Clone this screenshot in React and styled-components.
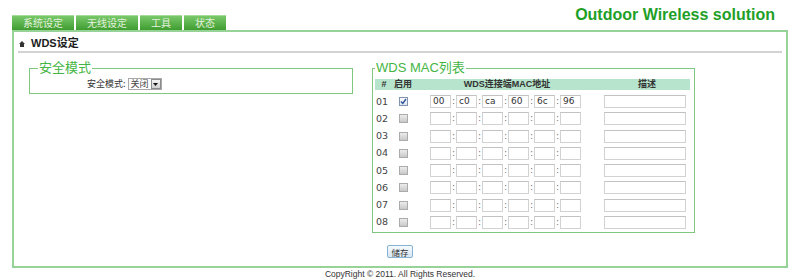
import React from 'react'
import styled, { createGlobalStyle } from 'styled-components'

const GlobalStyle = createGlobalStyle`
  * { box-sizing: border-box; }
  body {
    margin: 0;
    background: #fff;
    font-family: "DejaVu Sans", "Noto Sans CJK SC", sans-serif;
  }
`

const Page = styled.div`
  width: 800px;
  padding: 0 12px;
`

const TopBar = styled.div`
  display: flex;
  justify-content: space-between;
  height: 30px;
`

const Tabs = styled.nav`
  display: flex;
  gap: 2px;
  align-self: flex-end;
`

const Tab = styled.div`
  height: 15px;
  padding: 0 11px;
  font: 10px/14px "Noto Sans CJK SC", sans-serif;
  color: #e4f2de;
  background: linear-gradient(#79c86a, #3f9d30);
  border-top: 1px solid #a6dc9a;
`

const Title = styled.div`
  margin: 6px 13px 0 0;
  font: bold 16px/18px "Liberation Sans", sans-serif;
  color: #1f9f27;
`

const Panel = styled.section`
  border: 2px solid #97d397;
  padding-bottom: 8px;
`

const Heading = styled.h2`
  display: flex;
  align-items: center;
  gap: 6px;
  height: 17px;
  margin: 4px 4px 0;
  padding-left: 1px;
  border-bottom: 2px solid #d3d3d3;
  font: bold 11px/15px "Liberation Sans", "Noto Sans CJK SC", sans-serif;
  color: #1c1c1c;
`

const Columns = styled.div`
  display: flex;
  align-items: flex-start;
  gap: 19px;
  margin: 7px 0 0 15px;
`

const Fieldset = styled.fieldset`
  margin: 0;
  padding: 0;
  min-width: 0;
  width: ${p => p.$w}px;
  border: 1px solid #80c880;
`

const Legend = styled.legend`
  margin-left: ${p => p.$indent}px;
  padding: 0 1px;
  font: 13px/16px "Liberation Sans", "Noto Sans CJK SC", sans-serif;
  color: #44b544;
`

const ModeBody = styled.div`
  display: flex;
  align-items: center;
  height: 17px;
  padding: 1px 0 2px 57px;
`

const Label = styled.span`
  margin-right: 2px;
  font: 9px/12px "Noto Sans CJK SC", sans-serif;
  color: #333;
`

const SelectBox = styled.span`
  display: inline-flex;
  align-items: center;
  width: 34px;
  height: 12px;
  border: 1px solid #a9a9a9;
  background: #fff;
`

const SelectText = styled.span`
  flex: 1;
  padding-left: 2px;
  font: 9px/10px "Noto Sans CJK SC", sans-serif;
  color: #444;
`

const SelectArrow = styled.span`
  display: flex;
  align-items: center;
  justify-content: center;
  width: 10px;
  height: 10px;
  border: 1px solid #8c8c8c;
  background: linear-gradient(#f4f4f4, #cfcfcf);
`

const TableBody = styled.div`
  padding: 3px 4px 1px 2px;
`

const Row = styled.div`
  display: grid;
  grid-template-columns: 18px 25px 178px 94px;
  align-items: center;
  height: ${p => (p.$head ? '11px' : '17.25px')};
  margin-bottom: ${p => (p.$head ? '3px' : '0')};
  background: ${p => (p.$head ? '#b6e4cc' : 'transparent')};
`

const HeadCell = styled.span`
  text-align: ${p => p.$align || 'center'};
  padding-left: ${p => p.$pl || 0}px;
  font: bold 9px/11px "Liberation Sans", "Noto Sans CJK SC", sans-serif;
  color: #333;
`

const Num = styled.span`
  padding-left: 1px;
  font: 9.5px/12px "DejaVu Sans", sans-serif;
  color: #444;
`

const Check = styled.span`
  display: flex;
  align-items: center;
  justify-content: center;
  width: 9px;
  height: 9px;
  margin-left: 6px;
  border: 1px solid ${p => (p.$on ? '#8193ad' : '#ababab')};
  background: ${p => (p.$on ? 'linear-gradient(#fafbfd, #dfe5ee)' : 'linear-gradient(#ececec, #c8c8c8)')};
`

const Mac = styled.div`
  display: flex;
  align-items: center;
  padding-left: 12px;
`

const Field = styled.span`
  width: ${p => p.$w || 21}px;
  height: 13px;
  margin-left: ${p => p.$ml || 0}px;
  padding-left: 2px;
  border: 1px solid #d2d2d2;
  border-top-color: #c2c2c2;
  background: #fff;
  font: 9px/11px "DejaVu Sans", sans-serif;
  color: #333;
`

const Sep = styled.span`
  width: 5px;
  padding-right: 1px;
  text-align: right;
  font: 8px/11px "DejaVu Sans", sans-serif;
  color: #666;
`

const Actions = styled.div`
  display: flex;
  justify-content: center;
  margin-top: 12px;
`

const SaveButton = styled.button`
  width: 26px;
  height: 13px;
  padding: 0;
  border: 1px solid #84b3d6;
  border-radius: 2px;
  background: linear-gradient(#f6fafd, #d8e6f0);
  font: 8.5px/10px "Noto Sans CJK SC", sans-serif;
  color: #333;
`

const Footer = styled.footer`
  height: 12px;
  text-align: center;
  font: 8.5px/12px "Liberation Sans", sans-serif;
  color: #333;
`

const HomeIcon = () => (
  <svg width="6" height="6" viewBox="0 0 6 6">
    <path d="M3 0 L6 3 H5 V6 H1 V3 H0 Z" fill="#333" />
  </svg>
)

const rows = [
  { on: true, mac: ['00', 'c0', 'ca', '60', '6c', '96'] },
  ...Array.from({ length: 7 }, () => ({ on: false, mac: ['', '', '', '', '', ''] }))
]

export default function App () {
  return (
    <Page>
      <GlobalStyle />
      <TopBar>
        <Tabs>
          <Tab>系统设定</Tab>
          <Tab>无线设定</Tab>
          <Tab>工具</Tab>
          <Tab>状态</Tab>
        </Tabs>
        <Title>Outdoor Wireless solution</Title>
      </TopBar>
      <Panel>
        <Heading><HomeIcon />WDS设定</Heading>
        <Columns>
          <Fieldset $w={324}>
            <Legend $indent={8}>安全模式</Legend>
            <ModeBody>
              <Label>安全模式:</Label>
              <SelectBox>
                <SelectText>关闭</SelectText>
                <SelectArrow>
                  <svg width="5" height="3" viewBox="0 0 5 3"><path d="M0 0 H5 L2.5 3 Z" fill="#111" /></svg>
                </SelectArrow>
              </SelectBox>
            </ModeBody>
          </Fieldset>
          <Fieldset $w={323}>
            <Legend $indent={2}>WDS MAC列表</Legend>
            <TableBody>
              <Row $head>
                <HeadCell>#</HeadCell>
                <HeadCell $align="left" $pl={1}>启用</HeadCell>
                <HeadCell>WDS连接端MAC地址</HeadCell>
                <HeadCell $pl={8}>描述</HeadCell>
              </Row>
              {rows.map((r, i) => (
                <Row key={i}>
                  <Num>{String(i + 1).padStart(2, '0')}</Num>
                  <Check $on={r.on}>
                    {r.on && (
                      <svg width="7" height="7" viewBox="0 0 7 7">
                        <path d="M1 3.5 L2.8 5.5 L6 1" stroke="#2b4f98" strokeWidth="1.3" fill="none" />
                      </svg>
                    )}
                  </Check>
                  <Mac>
                    {r.mac.map((v, k) => (
                      <React.Fragment key={k}>
                        {k > 0 && <Sep>:</Sep>}
                        <Field>{v}</Field>
                      </React.Fragment>
                    ))}
                  </Mac>
                  <Field $w={82} $ml={8} />
                </Row>
              ))}
            </TableBody>
          </Fieldset>
        </Columns>
        <Actions>
          <SaveButton>储存</SaveButton>
        </Actions>
      </Panel>
      <Footer>CopyRight © 2011. All Rights Reserved.</Footer>
    </Page>
  )
}
